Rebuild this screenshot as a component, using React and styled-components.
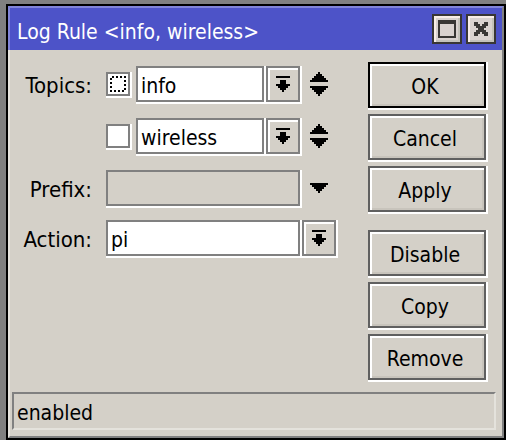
import React from "react";
import styled, { createGlobalStyle, css } from "styled-components";

const face = "#d4d0c8";
const font = '"DejaVu Sans Condensed", "DejaVu Sans", sans-serif';

const GlobalStyle = createGlobalStyle`
  * { box-sizing: border-box; }
  body {
    margin: 0;
    background: #808080;
    color: #000;
    font: 21px/26px ${font};
    font-stretch: condensed;
  }
  input, button { font: inherit; color: inherit; margin: 0; border-radius: 0; }
`;

const etched = css`
  box-shadow: 2px 0 #fff, 0 2px #fff, 2px 2px #fff;
`;

const Page = styled.div`
  display: flex;
  min-height: 100vh;
  padding: 4px 0 0 6px;
`;

const Dialog = styled.section`
  flex: 1;
  display: flex;
  flex-direction: column;
  background: ${face};
  border: 2px solid #000;
`;

const TitleBar = styled.header`
  display: flex;
  align-items: center;
  gap: 4px;
  height: 44px;
  padding: 0 6px 0 7px;
  background: #4d53c8;
  color: #fff;
  border-top: 2px solid #8084d8;
  border-left: 2px solid #8084d8;
  border-right: 2px solid #808080;
`;

const Title = styled.h1`
  flex: 1;
  margin: 0;
  padding-top: 6px;
  font-size: inherit;
  font-weight: normal;
  white-space: nowrap;
`;

const TitleButton = styled.button`
  display: grid;
  place-items: center;
  width: 30px;
  height: 30px;
  padding: 0;
  background: #d9d2cf;
  border: 2px solid #383634;
  box-shadow: inset 2px 2px #f8eee8, inset -2px -2px #c4c2ba;
`;

const Frame = styled.div`
  flex: 1;
  display: flex;
  flex-direction: column;
  border-left: 2px solid #e6e4de;
  border-right: 2px solid #808080;
  border-bottom: 2px solid #808080;
`;

const Content = styled.div`
  flex: 1;
  display: flex;
  gap: 32px;
  padding: 12px 16px 12px 16px;
`;

const Form = styled.form`
  flex: 1;
  min-width: 0;
  display: flex;
  flex-direction: column;
  gap: 16px;
  padding-top: 4px;
`;

const Row = styled.div`
  display: grid;
  grid-template-columns: 66px minmax(0, 1fr) 34px;
  align-items: center;
  height: 36px;
  margin-top: ${(p) => (p.$tight ? "-2px" : "0")};
`;

const Label = styled.label`
  justify-self: end;
  padding-top: 4px;
  font-size: 22px;
  white-space: nowrap;
`;

const Field = styled.div`
  display: flex;
  align-items: center;
  gap: 2px;
  padding: 0 2px 0 14px;
`;

const Check = styled.input`
  appearance: none;
  flex: none;
  display: grid;
  place-items: center;
  width: 24px;
  height: 24px;
  margin-right: 4px;
  background: #fff;
  border: 2px solid #808080;
  outline: none;
  ${etched}

  &::before {
    content: "";
    width: 16px;
    height: 16px;
    display: ${(p) => (p.$current ? "block" : "none")};
    background:
      repeating-linear-gradient(90deg, transparent 0 2px, #000 2px 4px) 0 0 / 100% 2px no-repeat,
      repeating-linear-gradient(90deg, #000 0 2px, transparent 2px 4px) 0 100% / 100% 2px no-repeat,
      repeating-linear-gradient(transparent 0 2px, #000 2px 4px) 0 0 / 2px 100% no-repeat,
      repeating-linear-gradient(#000 0 2px, transparent 2px 4px) 100% 0 / 2px 100% no-repeat;
  }
`;

const TextBox = styled.input`
  flex: 1;
  min-width: 0;
  height: 36px;
  padding: 4px 3px 0;
  background: #fff;
  border: 2px solid #808080;
  outline: none;
  ${etched}

  &:disabled { background: ${face}; }
`;

const DropButton = styled.button`
  flex: none;
  display: grid;
  place-items: center;
  width: 34px;
  height: 36px;
  padding: 0;
  background: ${face};
  border: 2px solid #808080;
  box-shadow: inset 2px 2px #fff, 2px 0 #fff, 0 2px #fff, 2px 2px #fff;
`;

const ArrowButton = styled.button`
  display: grid;
  place-items: center;
  width: 34px;
  height: 36px;
  padding: 0;
  background: none;
  border: 0;
`;

const Actions = styled.div`
  flex: none;
  display: flex;
  flex-direction: column;
  gap: 18px;
  width: 118px;
`;

const ActionGroup = styled.div`
  display: flex;
  flex-direction: column;
  gap: 6px;
`;

const ActionButton = styled.button`
  height: 46px;
  padding: 4px 4px 0 0;
  background: ${face};
  border: 2px solid ${(p) => (p.$primary ? "#000" : "#606060")};
  box-shadow: inset 2px 2px #fff, inset -2px -2px #c8c4bc, 2px 0 #fff, 0 2px #fff, 2px 2px #fff;
`;

const Status = styled.footer`
  margin: 0 6px 6px 2px;
  height: 38px;
  padding: 6px 3px 0;
  border: 2px solid;
  border-color: #808080 #e4e2dc #e4e2dc #808080;
`;

const DropIcon = () => (
  <svg width="14" height="16" shapeRendering="crispEdges" aria-hidden="true">
    <path d="M0 0h14v2H0zM4 4h6v4h4v2h-2v2h-2v2H8v2H6v-2H4v-2H2v-2H0V8h4z" />
  </svg>
);

const down = "h18v2h-2v2h-2v2h-2v2h-2v2h-2v-2h-2v-2h-2v-2h-2v-2h-2z";

const UpDownIcon = () => (
  <svg width="18" height="24" shapeRendering="crispEdges" aria-hidden="true">
    <path d="M8 0h2v2h2v2h2v2h2v2h2v2H0V8h2V6h2V4h2V2h2z" />
    <path d={`M0 14${down}`} />
  </svg>
);

const DownIcon = () => (
  <svg width="18" height="10" shapeRendering="crispEdges" aria-hidden="true">
    <path d={`M0 0${down}`} />
  </svg>
);

const MaximizeIcon = () => (
  <svg width="18" height="18" shapeRendering="crispEdges" aria-hidden="true">
    <path fill="#383634" fillRule="evenodd" d="M0 0h18v18H0zM2 4v12h14V4z" />
  </svg>
);

const CloseIcon = () => (
  <svg width="14" height="14" shapeRendering="crispEdges" aria-hidden="true">
    <path
      fill="#383634"
      d="M0 0h4v2h2v2h2V2h2V0h4v4h-2v2h-2v2h2v2h2v4h-4v-2H8v-2H6v2H4v2H0v-4h2V8h2V6H2V4H0z"
    />
  </svg>
);

const topics = ["info", "wireless"];

export default function App() {
  return (
    <Page>
      <GlobalStyle />
      <Dialog>
        <TitleBar>
          <Title>Log Rule &lt;info, wireless&gt;</Title>
          <TitleButton aria-label="Maximize"><MaximizeIcon /></TitleButton>
          <TitleButton aria-label="Close"><CloseIcon /></TitleButton>
        </TitleBar>
        <Frame>
          <Content>
            <Form onSubmit={(e) => e.preventDefault()}>
              {topics.map((topic, i) => (
                <Row key={topic}>
                  {i === 0 ? <Label htmlFor="topic-0">Topics:</Label> : <span />}
                  <Field>
                    <Check type="checkbox" $current={i === 0} aria-label={`Not ${topic}`} />
                    <TextBox id={`topic-${i}`} aria-label={`Topic ${i + 1}`} defaultValue={topic} />
                    <DropButton type="button" aria-label="Choose topic"><DropIcon /></DropButton>
                  </Field>
                  <ArrowButton type="button" aria-label="Add or remove topic"><UpDownIcon /></ArrowButton>
                </Row>
              ))}
              <Row>
                <Label htmlFor="prefix">Prefix:</Label>
                <Field><TextBox id="prefix" disabled /></Field>
                <ArrowButton type="button" aria-label="Set prefix"><DownIcon /></ArrowButton>
              </Row>
              <Row $tight>
                <Label htmlFor="action">Action:</Label>
                <Field><TextBox id="action" defaultValue="pi" /></Field>
                <DropButton type="button" aria-label="Choose action"><DropIcon /></DropButton>
              </Row>
            </Form>
            <Actions>
              <ActionGroup>
                <ActionButton $primary>OK</ActionButton>
                <ActionButton>Cancel</ActionButton>
                <ActionButton>Apply</ActionButton>
              </ActionGroup>
              <ActionGroup>
                <ActionButton>Disable</ActionButton>
                <ActionButton>Copy</ActionButton>
                <ActionButton>Remove</ActionButton>
              </ActionGroup>
            </Actions>
          </Content>
          <Status>enabled</Status>
        </Frame>
      </Dialog>
    </Page>
  );
}
